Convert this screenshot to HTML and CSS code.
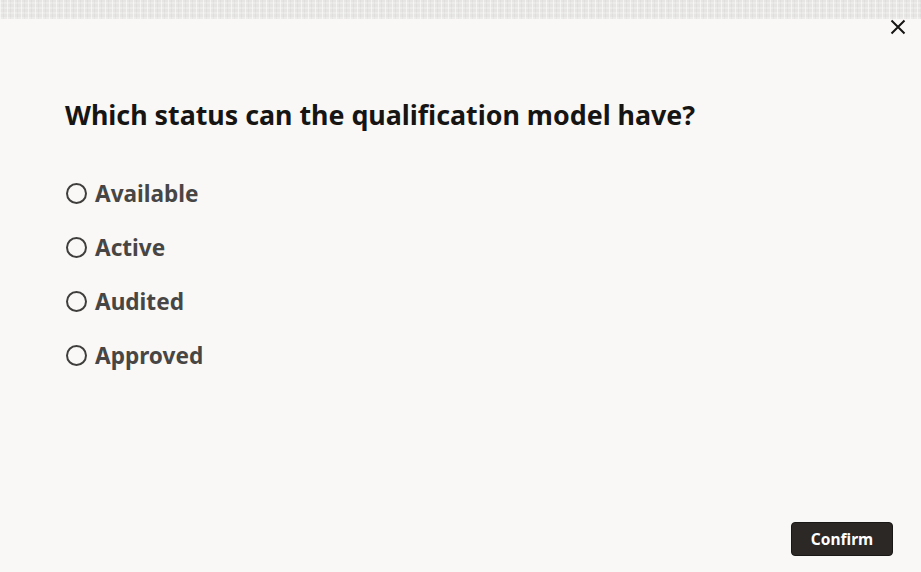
FILE: index.html
```html
<!DOCTYPE html>
<html lang="en">
<head>
<meta charset="utf-8">
<title>Question</title>
<link rel="stylesheet" href="styles.css">
</head>
<body>
<div class="strip"></div>
<main class="dialog">
  <div class="close-row">
    <button class="close" aria-label="Close">
      <svg width="16" height="16" viewBox="0 0 16 16"><path d="M1.5 1.5 L14.5 14.5 M14.5 1.5 L1.5 14.5" stroke="#161513" stroke-width="2" fill="none"/></svg>
    </button>
  </div>
  <h1 class="question">Which status can the qualification model have?</h1>
  <div class="options">
    <label class="option"><span class="radio"></span><span class="label">Available</span></label>
    <label class="option"><span class="radio"></span><span class="label">Active</span></label>
    <label class="option"><span class="radio"></span><span class="label">Audited</span></label>
    <label class="option"><span class="radio"></span><span class="label">Approved</span></label>
  </div>
  <div class="footer">
    <button class="confirm">Confirm</button>
  </div>
</main>
</body>
</html>
```
FILE: styles.css
```css
html, body {
  margin: 0;
  padding: 0;
  height: 100%;
}
body {
  background: #f9f8f6;
  font-family: "Noto Sans", "Open Sans", sans-serif;
  display: flex;
  flex-direction: column;
  height: 572px;
  overflow: hidden;
}
.strip {
  height: 19px;
  flex: none;
  background-color: #e6e5e3;
  background-image: repeating-linear-gradient(90deg, rgba(255,255,255,0.55) 0 1px, transparent 1px 3px, rgba(0,0,0,0.03) 3px 4px, transparent 4px 7px),
                    repeating-linear-gradient(0deg, rgba(255,255,255,0.25) 0 2px, transparent 2px 5px);
}
.dialog {
  flex: 1;
  display: flex;
  flex-direction: column;
  padding: 0 28px 16px 65px;
}
.close-row {
  display: flex;
  justify-content: flex-end;
}
.close {
  border: 0;
  background: none;
  padding: 0;
  width: 16px;
  height: 16px;
  margin-right: -13px;
  cursor: pointer;
}
.close svg { display: block; }
.question {
  margin: 62px 0 0 0;
  font-size: 26.8px;
  font-weight: 700;
  color: #161513;
  line-height: 36px;
  letter-spacing: 0;
}
.options {
  display: flex;
  flex-direction: column;
  gap: 24px;
  margin-top: 45px;
}
.option {
  display: flex;
  align-items: center;
  gap: 8px;
  height: 30px;
}
.radio {
  box-sizing: border-box;
  width: 21px;
  height: 21px;
  border: 2px solid #3f3e3c;
  border-radius: 50%;
  margin-left: 1px;
  flex: none;
}
.label {
  font-size: 22.6px;
  font-weight: 700;
  color: #484644;
}
.footer {
  margin-top: auto;
  display: flex;
  justify-content: flex-end;
}
.confirm {
  width: 102px;
  height: 34px;
  background: #2b2826;
  color: #fff;
  border: 1px solid #1a1816;
  border-radius: 4px;
  font-family: "Noto Sans", sans-serif;
  font-weight: 700;
  font-size: 15.5px;
}
```
